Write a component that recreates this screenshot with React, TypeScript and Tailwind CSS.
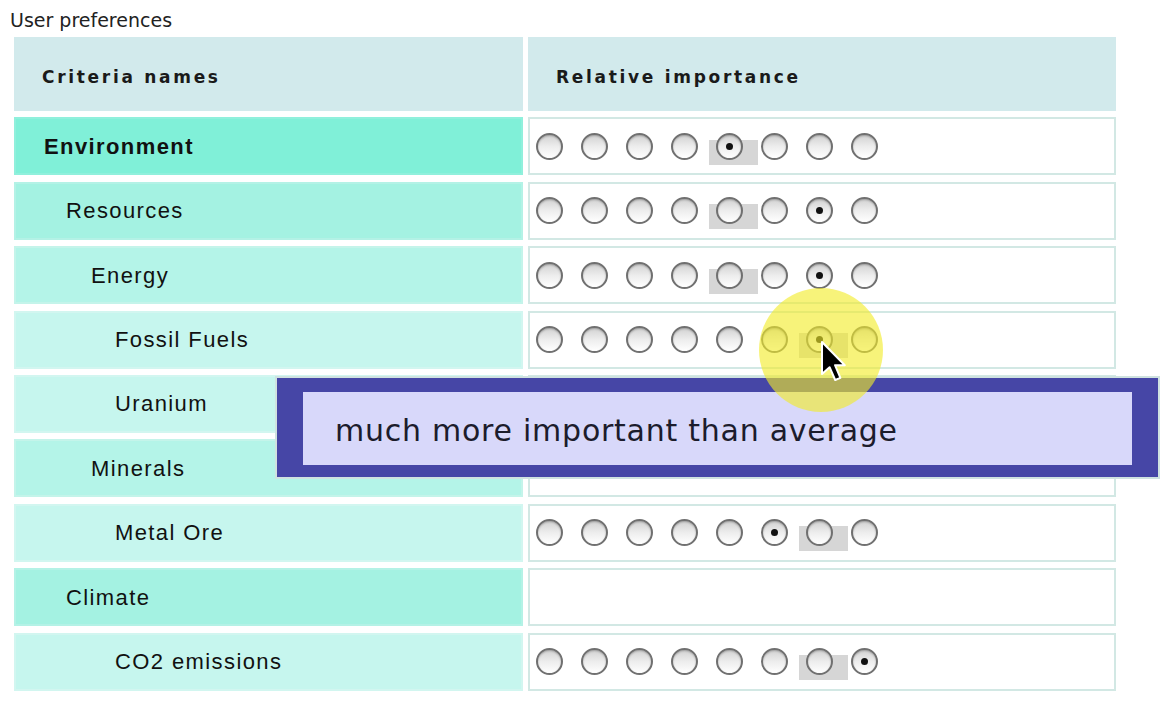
import React from "react";

type Row = { name: string; level: number; bold?: boolean; marker?: number; sel?: number };

const rows: Row[] = [
  { name: "Environment", level: 0, bold: true, marker: 4, sel: 4 },
  { name: "Resources", level: 1, marker: 4, sel: 6 },
  { name: "Energy", level: 2, marker: 4, sel: 6 },
  { name: "Fossil Fuels", level: 3, marker: 6, sel: 6 },
  { name: "Uranium", level: 3, marker: 6, sel: 6 },
  { name: "Minerals", level: 2 },
  { name: "Metal Ore", level: 3, marker: 6, sel: 5 },
  { name: "Climate", level: 1 },
  { name: "CO2 emissions", level: 3, marker: 6, sel: 7 },
];

const levelBg = ["bg-[#80f0d8]", "bg-[#a4f2e2]", "bg-[#b4f4e8]", "bg-[#c6f6ee]"];
const levelBorder = ["border-[#90f0dc]", "border-[#b4f2e6]", "border-[#c4f4ea]", "border-[#d2f6f0]"];
const levelPad = ["pl-[28px]", "pl-[50px]", "pl-[75px]", "pl-[99px]"];

function Radio({ checked, marker }: { checked: boolean; marker: boolean }) {
  return (
    <div className="relative w-[27px] h-[27px]">
      {marker && <div className="absolute left-[-7px] top-[7px] w-[49px] h-[25px] bg-[#d6d6d6]" />}
      <div className="relative w-[27px] h-[27px] rounded-full border-2 border-[#707070] bg-gradient-to-b from-[#d2d2d2] via-[#ededed] to-[#ffffff] shadow-[inset_0_1px_2px_rgba(0,0,0,0.25)] flex items-center justify-center">
        {checked && <div className="w-[7px] h-[7px] rounded-full bg-[#111]" />}
      </div>
    </div>
  );
}

export default function App() {
  return (
    <div className="relative w-[1170px] h-[726px] bg-white overflow-hidden">
      <div className="pl-[10px] pt-[9px] h-[37px] text-[19px] leading-[22px] text-[#222]" style={{ fontFamily: '"DejaVu Sans", sans-serif' }}>
        User preferences
      </div>
      <div className="ml-[14px] w-[1102px] flex flex-col gap-[6.4px]">
        <div className="flex gap-[5px] h-[74px]">
          <div className="w-[509px] bg-[#d2eaec] flex items-center pl-[28px] pt-[8px] text-[17px] font-bold tracking-[2.7px] text-[#1a1a1a]" style={{ fontFamily: '"DejaVu Sans", sans-serif' }}>
            Criteria names
          </div>
          <div className="w-[588px] bg-[#d2eaec] flex items-center pl-[28px] pt-[8px] text-[17px] font-bold tracking-[2.7px] text-[#1a1a1a]" style={{ fontFamily: '"DejaVu Sans", sans-serif' }}>
            Relative importance
          </div>
        </div>
        {rows.map((r) => (
          <div key={r.name} className="flex gap-[5px] h-[58px]">
            <div
              className={`w-[509px] border-2 ${levelBg[r.level]} ${levelBorder[r.level]} ${levelPad[r.level]} flex items-center text-[22px] tracking-[1.4px] text-[#111] ${r.bold ? "font-bold" : ""}`}
              style={{ fontFamily: '"Liberation Sans", Arial, sans-serif' }}
            >
              {r.name}
            </div>
            <div className="w-[588px] border-2 border-[#d2e8e4] bg-white flex items-center pl-[6px] gap-[18px]">
              {r.sel !== undefined &&
                Array.from({ length: 8 }).map((_, i) => (
                  <Radio key={i} checked={i === r.sel} marker={i === r.marker} />
                ))}
            </div>
          </div>
        ))}
      </div>

      {/* tooltip */}
      <div className="absolute left-[275px] top-[376px] w-[885px] h-[103px] border-2 border-[#cfe2e0]">
        <div className="w-full h-full border-l-[26px] border-r-[26px] border-t-[14px] border-b-[12px] border-[#4646a6] bg-[#d8d8fa] flex items-center pl-[32px] pt-[3px] text-[30px] tracking-[0.75px] text-[#1c1c2c]" style={{ fontFamily: '"DejaVu Sans", sans-serif' }}>
          much more important than average
        </div>
      </div>

      {/* highlight circle */}
      <div className="absolute left-[759px] top-[288px] w-[124px] h-[124px] rounded-full bg-[rgba(242,236,40,0.62)]" />

      {/* cursor */}
      <svg className="absolute left-[820px] top-[340px]" width="28" height="44" viewBox="0 0 14 22">
        <path d="M1 1 L1 17 L4.8 13.6 L7.6 20 L10.2 18.9 L7.5 12.6 L12.4 12.6 Z" fill="#000" stroke="#fff" strokeWidth="1" strokeLinejoin="round" />
      </svg>
    </div>
  );
}
